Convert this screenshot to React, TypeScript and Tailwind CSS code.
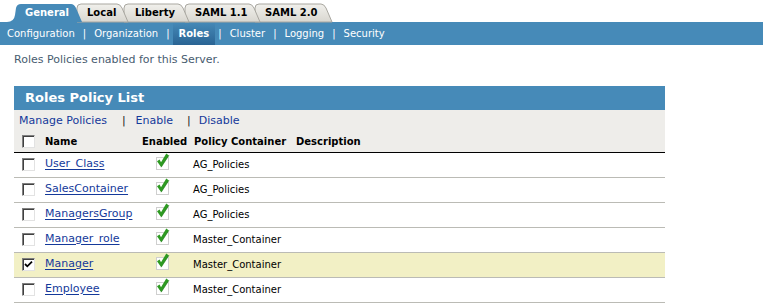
import React from "react";

type TabProps = { label: string; selected?: boolean; cls: string; w: number };

function Tab({ label, selected, cls, w }: TabProps) {
  const h = 19;
  const shape = selected
    ? `M-8 ${h} Q-1 ${h} 0 12 L1 5 Q2 1 6 1 L${w - 12} 1 Q${w - 9} 1 ${w - 7} 5 L${w - 1} ${h} Z`
    : `M0 ${h} L0 5 Q0 1 4 1 L${w - 12} 1 Q${w - 9} 1 ${w - 7} 5 L${w - 1} ${h} Z`;
  return (
    <div className={`relative h-[19px] flex items-center ${cls}`}>
      <svg
        className="absolute left-0 top-0 overflow-visible"
        width={w}
        height={h}
        viewBox={`0 0 ${w} ${h}`}
      >
        <defs>
          <linearGradient id="tabgray" x1="0" y1="0" x2="0" y2="1">
            <stop offset="0" stopColor="#f1f0ec" />
            <stop offset="1" stopColor="#d9d7d0" />
          </linearGradient>
        </defs>
        {selected ? (
          <path d={shape} fill="#468AB8" />
        ) : (
          <path d={shape} fill="url(#tabgray)" stroke="#a9a7a0" strokeWidth="1" />
        )}
      </svg>
      <span
        className={`relative text-[10px] font-bold leading-none ${
          selected ? "text-white" : "text-black"
        }`}
      >
        {label}
      </span>
    </div>
  );
}

function Checkbox({ checked }: { checked?: boolean }) {
  return (
    <div className="w-[13px] h-[13px] bg-white border border-t-[#808080] border-l-[#808080] border-b-[#e2e2e2] border-r-[#e2e2e2] shadow-[inset_1px_1px_0_#404040] flex items-center justify-center">
      {checked && (
        <svg width="9" height="9" viewBox="0 0 9 9">
          <path d="M1 4 L3.3 6.3 L8 1.6" fill="none" stroke="#000" strokeWidth="1.8" />
        </svg>
      )}
    </div>
  );
}

function EnabledIcon() {
  return (
    <svg width="15" height="17" viewBox="0 0 15 17" className="block">
      <rect x="1.5" y="4.5" width="12" height="12" fill="#ffffff" stroke="#cfcfcf" />
      <path d="M2 8.2 L4.6 6.4 L6 9.2 L11.3 0.6 L13.9 2.4 L6.2 14.2 Z" fill="#2E9A22" />
      <path d="M6.2 14.2 L13.9 2.4" stroke="#1d7a16" strokeWidth="0.6" fill="none" />
    </svg>
  );
}

const rows = [
  { name: "User_Class", container: "AG_Policies" },
  { name: "SalesContainer", container: "AG_Policies" },
  { name: "ManagersGroup", container: "AG_Policies" },
  { name: "Manager_role", container: "Master_Container" },
  { name: "Manager", container: "Master_Container", checked: true },
  { name: "Employee", container: "Master_Container" },
];

export default function App() {
  return (
    <div className="w-[766px] h-[304px] bg-white overflow-hidden font-['DejaVu_Sans',sans-serif]">
      {/* Tabs */}
      <div className="flex h-[22px] items-end pl-[15px]">
        <Tab label="General" selected cls="w-[68px] pl-[10px] z-50" w={68} />
        <Tab label="Local" cls="w-[52px] pl-[10px] -ml-[6px] z-40" w={52} />
        <Tab label="Liberty" cls="w-[66px] pl-[11px] -ml-[5px] z-30" w={66} />
        <Tab label="SAML 1.1" cls="w-[76px] pl-[10px] -ml-[5px] z-20" w={76} />
        <Tab label="SAML 2.0" cls="w-[78px] pl-[10px] -ml-[6px] z-10" w={78} />
      </div>

      {/* Sub navigation */}
      <div className="w-[763px] h-[23px] bg-[#468AB8] flex items-stretch pl-[7px] text-[10px] text-white gap-[8px]">
        <span className="flex items-center">Configuration</span>
        <span className="flex items-center">|</span>
        <span className="flex items-center">Organization</span>
        <span className="flex items-center">|</span>
        <span className="flex items-center -mx-[5px] px-[6px] font-bold bg-gradient-to-b from-[#468AB8] to-[#2A6494]">
          Roles
        </span>
        <span className="flex items-center">|</span>
        <span className="flex items-center">Cluster</span>
        <span className="flex items-center">|</span>
        <span className="flex items-center">Logging</span>
        <span className="flex items-center">|</span>
        <span className="flex items-center">Security</span>
      </div>

      <p className="mt-[8px] ml-[14px] text-[11px] leading-[13px] text-[#485C70]">
        Roles Policies enabled for this Server.
      </p>

      {/* Table */}
      <div className="ml-[14px] mt-[20px] w-[651px]">
        <div className="h-[24px] bg-[#468AB8] flex items-center pl-[11px] text-white text-[13px] font-bold">
          Roles Policy List
        </div>
        <div className="bg-[#EEEDEA] border-b border-black">
          <div className="h-[23px] flex items-center pl-[5px] text-[11px] text-[#14399A]">
            <span>Manage Policies</span>
            <span className="ml-[15px] mr-[10px] text-[#222222]">|</span>
            <span>Enable</span>
            <span className="ml-[14px] mr-[8px] text-[#222222]">|</span>
            <span>Disable</span>
          </div>
          <div className="h-[19px] grid grid-cols-[31px_97px_52px_102px_1fr] items-center pb-[2px] text-[10px] font-bold text-black">
            <div className="pl-[8px]">
              <Checkbox />
            </div>
            <span>Name</span>
            <span>Enabled</span>
            <span>Policy Container</span>
            <span>Description</span>
          </div>
        </div>
        {rows.map((r) => (
          <div
            key={r.name}
            className={`relative h-[25px] border-b border-[#BBBBB5] grid grid-cols-[31px_97px_52px_102px_1fr] items-center pb-[2px] ${
              r.checked ? "bg-[#F2F0C5]" : ""
            }`}
          >
            <div className="pl-[8px]">
              <Checkbox checked={r.checked} />
            </div>
            <span className="text-[11px] text-[#14399A] underline underline-offset-[2px]">
              {r.name}
            </span>
            <div className="self-start pl-[13px] pt-0">
              <EnabledIcon />
            </div>
            <span className="text-[10px] text-black -ml-[1px]">{r.container}</span>
            <span />
          </div>
        ))}
      </div>
    </div>
  );
}
